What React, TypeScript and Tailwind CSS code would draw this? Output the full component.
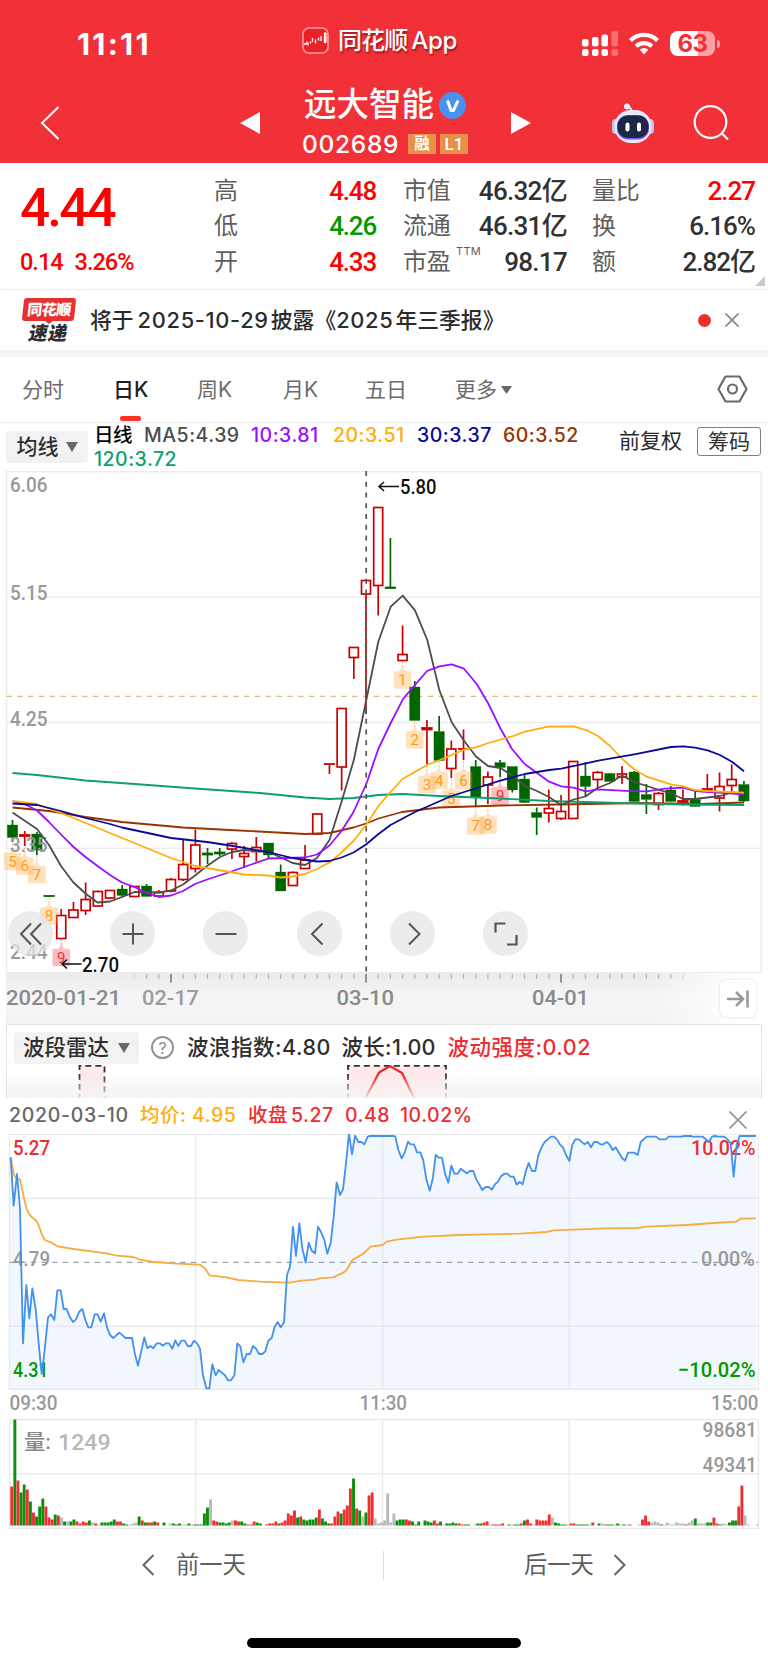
import { ReactNode } from "react";

const RED = "#cc0000";
const GREEN = "#006600";

// [body top, body bottom, high, low, rising]
type Candle = [number, number, number, number, boolean];

const candles: Candle[] = [
  [825, 837.5, 820, 842, false],
  [834.5, 836.5, 831, 846, true],
  [834, 850, 832, 855, false],
  [895.5, 896.5, 895.5, 896.5, false],
  [915.5, 938.5, 909, 939, true],
  [910, 917.5, 902, 917.5, true],
  [899.5, 910.5, 882.5, 915, true],
  [891.5, 906, 890.5, 906, true],
  [890.5, 898, 890.5, 899, true],
  [889, 895.5, 885, 897, false],
  [886.5, 896.5, 886.5, 896.5, true],
  [886, 896.5, 884, 896.5, false],
  [892.5, 896, 890, 897, true],
  [879.5, 891, 878, 892.5, true],
  [864.5, 879.5, 840, 881, true],
  [845, 868.5, 829.5, 872.5, true],
  [853, 855, 848, 864, false],
  [852, 854, 848, 856, false],
  [843.5, 849, 842, 859, true],
  [853.5, 856.5, 846, 868, true],
  [847.5, 851.5, 837, 861.5, true],
  [843, 855, 843, 858.5, false],
  [872, 891, 864.5, 891, false],
  [872.5, 885.5, 871.5, 886, true],
  [860, 868.5, 845, 868.5, true],
  [814, 834, 814, 834, true],
  [763.5, 764.5, 763.5, 774, true],
  [708.5, 767, 708.5, 790.5, true],
  [647.5, 657.5, 647.5, 679, true],
  [580.5, 594, 580.5, 714, true],
  [507.5, 585.5, 507.5, 615.5, true],
  [587, 588.5, 538, 588.5, false],
  [654.5, 660.5, 625.5, 660.5, true],
  [687, 720.5, 681, 720.5, false],
  [727.5, 730, 720, 764, true],
  [731.5, 760.5, 716, 760.5, false],
  [749, 768.5, 740.5, 778, true],
  [748.5, 749.5, 729.5, 760, true],
  [766.5, 797, 760, 806, false],
  [777, 785, 771.5, 804, true],
  [762.5, 767.5, 760, 777, false],
  [766.5, 790, 766.5, 792.5, false],
  [779, 802.5, 775, 803, false],
  [812.5, 817.5, 807.5, 835, false],
  [808.5, 813, 789.5, 822.5, true],
  [811.5, 818.5, 795, 820, true],
  [761.5, 818.5, 761.5, 818.5, true],
  [776, 786.5, 762, 797, false],
  [772.5, 779.5, 771, 788, true],
  [773.5, 781.5, 773, 781.5, false],
  [774, 777, 766, 784, true],
  [772, 801.5, 771, 802.5, false],
  [794.5, 799.5, 784, 814, false],
  [793.5, 804.5, 792, 810, true],
  [790, 801.5, 786, 802, false],
  [800.5, 802.5, 789.5, 805.5, true],
  [799.5, 806.5, 791.5, 807, false],
  [788.5, 790.5, 774, 793, true],
  [786.5, 798, 772.5, 811.5, true],
  [779.5, 785.5, 764.5, 793, true],
  [784.5, 801, 781, 802, false],
];

const candleX = (i: number) => 12.5 + i * 12.19;

const averages = [
  {
    color: "#993300",
    points:
      "12.5,807.5 49,811 85.5,817 122,822 183,827.5 230,830 268,832 305,834 329.5,833 353.5,827.5 366,823.5 378.5,818.5 402,812 439,807.5 470,806.5 500,805.5 560,804.5 640,803 700,804 744,802.5",
  },
  {
    color: "#0d9f6e",
    points:
      "12.5,773 37,775 85.5,780.5 134.5,784 195,788.5 260,793 305,797.5 329.5,799 353.5,798 378.5,795 402.5,794 439.5,796 500,798.5 549,801 620,803 683,804.5 744,805",
  },
  {
    color: "#4d4d4d",
    points:
      "12.5,812.5 37,829 49,845 61,866 73,882 86,894 97.5,902.5 110,901.5 122,897 134.5,892 159,892.5 171,890.5 183,884.5 195,875.5 207,866 220,857 232,852 244,850 268.5,852 280,857 292.5,863 305,865 317,858 329.5,840 341.5,802 353.8,760 366.3,700 378.3,641.7 390.7,606.7 402.7,595.7 415,610.3 427.3,640 439.3,690 451.7,722.3 464,740.7 476,756.5 488,766 500.5,768 513,776 525,786 537,791 549,797 561,805 573.5,799.5 585.5,796.5 597.5,788 610,783 622,775.5 634,782 647,786 659,790 671.5,793.5 683,799 695,799 707.5,797.5 720,796 732,792.5 744,794",
  },
  {
    color: "#9b0fff",
    points:
      "12.5,801 24.5,804 37,810.5 49,822 61,834.5 73.5,847 85.5,857 97.5,866 110,875 122,882.5 134.5,887 146.5,893 159,897 171,895.5 183,891 195,884 207,879.5 230,872 244,867 268.5,858.5 305,857.5 317,854.5 329.5,845.5 341.5,831 353.5,812 366.3,784 378.3,749 390.7,723 403.3,698.7 415,685 427,671 439.3,666.3 451.7,664.3 464,668.7 476.7,684 488,703 500,727.7 512,749 524.7,764 536.7,772.7 549,781.7 561.3,786.3 573.3,787.7 585.7,791.3 598,789.3 634.3,791.3 646.7,791.3 665,788.7 683.3,787.7 695,791 713,792.3 730,793.3 744,794.5",
  },
  {
    color: "#ffae0d",
    points:
      "12.5,801 37,804 73.5,818 110,833 146.5,848 171,858 195,866 230,872 244,874.5 268,875.5 280.5,877.5 292.5,876.5 305,874 317,869 329.5,862.5 341.5,852.5 353.5,841 366,825 378.5,806 390.5,792 402.5,779 427,765 440,760 464,749.7 476,747.3 488.3,743 513.3,736 525,731.7 548.3,726.7 574,726.3 586.7,730.3 598.3,736.3 610,746 623.3,760 634.3,769.3 646.7,776.7 671,784.3 683.3,786.3 695,790 707.7,791 744,792.7",
  },
  {
    color: "#0a0a99",
    points:
      "12.5,803.5 37,805 61,811 85.5,818 110,824 122,827.5 171,838 207,842 230,845.5 268,852 292.5,858 317,861.5 329.5,861 341.5,857.5 353.5,852.5 366,844.5 378.5,834 390.5,825 415,812 451.5,796 480,787 500.3,780.7 524.7,774 549.3,770 561.3,768.7 598.3,760.7 634.3,754.3 671,747 683.3,746.3 695,747.7 707.7,750.3 720,755 732.3,762 744,771.3",
  },
];

// [candle index, centre y, digit, stem start]
const markers: [number, number, string, number][] = [
  [0, 861.5, "5", 843],
  [1, 866, "6", 847],
  [2, 874.5, "7", 855],
  [3, 916, "8", 897],
  [4, 957.5, "9", 939],
  [32, 680, "1", 661],
  [33, 740, "2", 721],
  [34, 784.5, "3", 765],
  [35, 780.5, "4", 761],
  [36, 799, "5", 779],
  [37, 780.5, "6", 761],
  [38, 826, "7", 807],
  [39, 825, "8", 805],
  [40, 796, "9", 777],
];

const priceLine =
  "32,112 41,257 51,162 60,265 69,670 79,495 88,595 97,505 107,568 116,670 125,762 134,690 144,592 153,583 163,600 172,511 182,511 191,567 200,567 209,590 219,606 228,598 237,576 247,567 256,600 265,622 274,622 284,583 293,583 302,605 312,580 321,622 330,645 340,654 358,638 377,654 396,654 405,703 414,737 433,652 442,685 451,678 460,685 470,670 480,670 488,677 498,670 507,670 517,686 526,661 535,678 544,662 554,662 563,678 573,678 582,662 591,670 600,686 609,766 619,805 628,805 637,733 647,766 656,750 675,766 684,781 693,781 703,766 712,670 721,679 730,727 740,702 750,702 759,678 768,686 777,702 787,702 796,694 805,662 815,654 824,621 833,606 842,622 852,607 861,465 870,440 879,321 888,408 898,310 907,385 917,428 926,368 935,392 945,400 954,320 963,336 973,360 982,401 992,368 1001,290 1010,187 1020,225 1029,208 1038,130 1047,40 1056,103 1065,47 1075,66 1084,66 1093,73 1103,50 1110,48 1182,48 1186,50 1195,90 1205,115 1214,98 1224,65 1232,73 1242,73 1251,97 1261,97 1270,122 1279,178 1289,212 1298,178 1307,105 1316,113 1326,113 1335,160 1345,188 1354,137 1363,161 1373,161 1382,146 1400,160 1410,153 1420,153 1429,178 1447,210 1457,201 1467,201 1475,209 1485,193 1494,185 1503,169 1513,161 1522,161 1531,170 1541,170 1550,194 1559,186 1568,193 1577,155 1586,129 1596,153 1606,153 1615,106 1625,81 1634,66 1653,50 1662,50 1671,58 1680,74 1689,82 1698,105 1708,123 1717,74 1726,58 1736,58 1754,73 1764,66 1773,82 1782,66 1792,66 1801,73 1810,73 1820,66 1829,74 1838,90 1847,82 1866,114 1875,122 1884,98 1903,98 1913,105 1922,66 1940,50 1969,50 1978,58 1997,58 2006,50 2043,50 2052,48 2071,48 2078,50 2108,50 2118,58 2127,66 2136,50 2145,48 2154,50 2173,50 2182,58 2192,70 2201,170 2210,73 2219,48 2268,48";

const avgLine =
  "32,112 42,165 52,177 60,178 70,225 79,265 88,283 97,293 107,300 116,315 125,342 134,360 153,367 172,379 220,387 280,395 320,400 350,407 400,411 420,419 460,426 530,431 600,434 615,445 628,466 680,472 715,480 780,485 868,488 905,482 945,479 960,475 1000,472 1030,458 1040,450 1057,420 1090,401 1112,380 1148,375 1160,365 1190,359 1270,350 1380,345 1560,341 1640,336 1660,331 1820,325 1910,324 1940,320 2060,315 2140,309 2208,305 2222,296 2268,295";

// one entry per minute: colour letter (R up, G down, X flat) and height
const volumes =
  "R39 G106 R45 G33 G41 R36 G24 R13 G9 G19 G27 R19 R8 R6 G11 R10 X8 G4 X4 G4 G6 R4 R2 R4 R3 G5 X3 R2 X1 G3 G3 G3 G4 G6 R4 R4 G2 G1 X1 X2 X3 G9 R5 G3 R3 R3 G4 R3 X0 G3 X0 X2 G2 G1 G2 X1 X1 G2 X1 G1 G1 G1 G12 G18 X26 R5 R4 G3 G3 G2 G3 X5 R5 R4 G4 G2 R1 R1 R4 G3 G2 X0 R1 R2 R2 R4 G2 R3 R5 R12 R10 R15 G8 R9 G6 G5 G6 G6 G8 R16 G7 G4 G2 R2 R9 R14 G12 R16 R20 R37 G47 R17 G15 X9 G13 R30 R33 X7 X2 X3 X5 X32 X3 X12 G5 G6 G6 R6 R5 G4 G1 G4 X0 G5 G4 G3 R5 R2 G4 X1 G2 G2 G3 G2 R2 R1 G1 G1 X0 X1 G2 G2 R3 R4 X1 R1 R1 R1 R2 X0 G1 X1 G1 G1 R2 G5 R6 R2 X1 R6 R5 R5 R5 R11 X8 G3 G2 G1 G1 X1 R2 R2 G1 G1 G1 G1 X1 R3 X0 G2 X2 R1 G1 G1 X1 G2 X1 G1 X1 R1 X0 X0 X1 R6 R10 R4 X3 X4 X3 G1 X1 X3 X1 X1 X3 X2 X2 R1 X3 X5 G7 X2 X2 X2 G3 G3 R8 R2 G1 X2 X1 G3 G5 G5 R19 R40 X10 X1 X0 X0 X1"
    .split(" ")
    .map((v) => ({ kind: v[0], height: Number(v.slice(1)) }));

const volumeColors: Record<string, string> = {
  R: "#ee3033",
  G: "#0c8f0c",
  X: "#b9b9b9",
};

// Chart label squeezed to the narrow numeral width of the app
const Label = ({
  x,
  y,
  w,
  size = 21,
  fill = "#999",
  children,
}: {
  x: number;
  y: number;
  w: number;
  size?: number;
  fill?: string;
  children: string;
}) => (
  <text
    x={x}
    y={y + size * 0.356}
    fontSize={size}
    fontWeight={500}
    fill={fill}
    textLength={w}
    lengthAdjust="spacingAndGlyphs"
    className="font-['Roboto','Noto_Sans_CJK_SC',sans-serif]"
  >
    {children}
  </text>
);

const StatusBar = () => (
  <div className="grid h-[84px] grid-cols-[302px_279px_1fr] items-center pt-[3px] text-white">
    <span className="pl-[77px] text-[30.500px] font-bold tracking-[2.200px]">11:11</span>
    <div className="flex items-center gap-[9px]">
      <svg width="27" height="27" viewBox="0 0 27 27" className="-mt-[6px]">
        <rect x="1" y="1" width="25" height="25" rx="6" fill="#ea2227" stroke="#f8a0a3" strokeWidth="1.6" />
        <path
          d="M2 17h3M5 17v-2.5M6 15.5v3M8.5 16.5v-2M10.500 11v4M13.500 12.500v4M16.500 10.500v3M19 9v5M22.500 6v9.500M24 6v9.500M22.500 6h1.500M22.500 15.500h1.500"
          stroke="#fff"
          strokeWidth="1.300"
        />
      </svg>
      <span className="-mt-[5px] text-[24px] font-medium tracking-[-0.900px] [text-shadow:1px_2px_2px_rgba(80,0,0,0.55)]">
        同花顺<span className="ml-[4px] tracking-[-0.3px]">App</span>
      </span>
    </div>
    <div className="flex items-center gap-[11px] pl-[1px]">
      <svg width="36" height="25" viewBox="0 0 36 25" fill="#fff">
        <rect x="0" y="8" width="6.500" height="7.500" rx="2" />
        <rect x="10" y="6" width="6.500" height="9.500" rx="2" />
        <rect x="19.500" y="3.500" width="6.500" height="12" rx="2" />
        <rect x="0" y="18" width="6.500" height="7" rx="2" />
        <rect x="10" y="18" width="6.500" height="7" rx="2" />
        <rect x="19.500" y="18" width="6.500" height="7" rx="2" />
        <g opacity="0.3">
          <rect x="29.500" y="0" width="6.500" height="15.500" rx="2" />
          <rect x="29.500" y="18" width="6.500" height="7" rx="2" />
        </g>
      </svg>
      <svg width="30" height="23" viewBox="0 0 30 23" fill="none" stroke="#fff" strokeWidth="4.200">
        <path d="M1.500 8.500a19 19 0 0 1 27 0" />
        <path d="M7 14.300a11.500 11.500 0 0 1 16 0" />
        <path d="M15 22.500l-4.200-4.800a6.200 6.200 0 0 1 8.400 0z" fill="#fff" stroke="none" />
      </svg>
      <div className="flex items-center gap-[2px]">
        <div className="relative flex h-[25px] w-[45px] items-center justify-center overflow-hidden rounded-[8px] bg-[linear-gradient(90deg,#fff_63%,#f9a0a4_63%)]">
          <span className="text-[24px] leading-none font-bold tracking-[-0.5px] text-[#f23038]">63</span>
        </div>
        <div className="h-[8px] w-[3px] rounded-r-full bg-[#f9a0a4]" />
      </div>
    </div>
  </div>
);

const Robot = () => (
  <svg width="44" height="42" viewBox="0 0 44 42">
    <path d="M15 5q5-1 6 5" fill="none" stroke="#dfe6fb" strokeWidth="2" />
    <circle cx="16" cy="4.500" r="3" fill="#e9eefc" />
    <rect x="1" y="17" width="8" height="15" rx="4" fill="#bcc6ea" />
    <rect x="35" y="17" width="8" height="15" rx="4" fill="#bcc6ea" />
    <rect x="3.500" y="8" width="37" height="33" rx="16" fill="#e6ebfb" />
    <rect x="6" y="13" width="32" height="24.500" rx="11" fill="#7b56e0" />
    <rect x="6.500" y="13.500" width="31" height="22.500" rx="10.500" fill="#1d2848" />
    <rect x="14.500" y="20.500" width="4" height="9" rx="2" fill="#fff" />
    <rect x="26" y="20.500" width="4" height="9" rx="2" fill="#fff" />
  </svg>
);

const TitleBar = () => (
  <div className="grid h-[79px] grid-cols-[240px_62px_209px_100px_1fr] items-center text-white">
    <svg width="20" height="36" viewBox="0 0 20 36" className="ml-[40px] -mt-[2px]">
      <path d="M18.500 2L2 18l16.500 16" fill="none" stroke="#fff" strokeWidth="2" />
    </svg>
    <svg width="20" height="22" viewBox="0 0 20 22" className="-mt-[1px]">
      <path d="M20 0v22L0 11z" fill="#fff" />
    </svg>
    <div className="h-[79px]">
      <div className="flex h-[40px] items-center gap-[5px] pt-[2px] pl-[2px]">
        <span className="text-[32.500px] leading-none font-medium">远大智能</span>
        <svg width="27" height="27" viewBox="0 0 27 27">
          <circle cx="13.500" cy="13.500" r="13.500" fill="#4a90ee" />
          <path d="M8.500 8.500L12 18.500h2.500L19 8.500" fill="none" stroke="#fff" strokeWidth="3" strokeLinejoin="round" />
        </svg>
      </div>
      <div className="flex h-[39px] items-center pt-[1px]">
        <span className="w-[106px] text-[24.500px] font-medium tracking-[0.700px]">002689</span>
        <span className="mr-1 flex h-[20px] w-[28px] items-center justify-center bg-[#e59149] text-[15.500px] leading-none font-bold">
          融
        </span>
        <span className="flex h-[20px] w-[28px] items-center justify-center bg-[#e59149] font-['Roboto'] text-[17px] leading-none font-medium">
          L1
        </span>
      </div>
    </div>
    <svg width="20" height="22" viewBox="0 0 20 22" className="-mt-[1px]">
      <path d="M0 0v22l20-11z" fill="#fff" />
    </svg>
    <div className="-mt-[2px] flex items-center gap-[38px]">
      <Robot />
      <svg width="36" height="36" viewBox="0 0 36 36" fill="none" stroke="#fff" strokeWidth="2.200">
        <circle cx="17.500" cy="17" r="15.800" />
        <path d="M28.500 28l6.500 6.500" />
      </svg>
    </div>
  </div>
);

const quotes = [
  ["高", "4.48", "text-[#ff0000]", "市值", "46.32亿", "量比", "2.27", "text-[#ff0000]"],
  ["低", "4.26", "text-[#009900]", "流通", "46.31亿", "换", "6.16%", "text-[#323232]"],
  ["开", "4.33", "text-[#ff0000]", "市盈", "98.17", "额", "2.82亿", "text-[#323232]"],
];

const Quote = () => (
  <div className="relative flex h-[127px] border-b border-[#ececec]">
    <div className="w-[214px] pl-[20px] font-['Roboto'] font-medium text-[#ff0000]">
      <div className="mt-[18px] h-[54px] text-[53px] leading-[54px] tracking-[-2.800px]">4.44</div>
      <div className="mt-[15px] flex gap-[12px] text-[23.500px] leading-[24px] tracking-[-1px]">
        <span>0.14</span>
        <span>3.26%</span>
      </div>
    </div>
    <div className="flex flex-col pt-[10px]">
      {quotes.map((q) => (
        <div
          key={q[0]}
          className="grid h-[35.500px] grid-cols-[60px_102px_27px_50px_114px_25px_50px_113px] items-center text-[24px] leading-none font-medium tracking-[-0.3px] text-[#323232]"
        >
          <span className="font-normal text-[#5f5f5f]">{q[0]}</span>
          <span className={`text-right font-['Roboto'] text-[26px] tracking-[-1.200px] ${q[2]}`}>{q[1]}</span>
          <span />
          <span className="relative font-normal whitespace-nowrap text-[#5f5f5f]">
            {q[3]}
            {q[3] === "市盈" && (
              <span className="absolute -top-[4px] left-[53px] text-[11px] leading-none tracking-[0.3px]">TTM</span>
            )}
          </span>
          <span className="text-right font-['Roboto','Noto_Sans_CJK_SC'] text-[26px] tracking-[-0.700px]">{q[4]}</span>
          <span />
          <span className="font-normal whitespace-nowrap text-[#5f5f5f]">{q[5]}</span>
          <span className={`text-right font-['Roboto','Noto_Sans_CJK_SC'] text-[26px] tracking-[-1px] ${q[7]}`}>
            {q[6]}
          </span>
        </div>
      ))}
    </div>
    <svg width="10" height="10" className="absolute right-[3px] bottom-[3px]">
      <path d="M10 0v10H0z" fill="#c8c8c8" />
    </svg>
  </div>
);

const News = () => (
  <div className="flex h-[60px] items-center pl-[22px]">
    <div className="flex h-[45px] w-[54px] flex-col items-center">
      <div className="flex h-[23px] w-[52px] -skew-x-6 items-center justify-center rounded-[3px] bg-[#e83030] text-[15px] leading-none font-black tracking-[-0.500px] text-white">
        同花顺
      </div>
      <svg width="8" height="3" className="shrink-0">
        <path d="M0 0h8L4 3z" fill="#e83030" />
      </svg>
      <div className="-skew-x-12 text-[19px] leading-[19px] font-black tracking-[0.5px] text-[#2e2e2e]">速递</div>
    </div>
    <p className="ml-[14px] flex-1 text-[21.800px] font-medium whitespace-pre text-[#2b2b2b]">
      将于<span className="mr-[2px] ml-[4px] tracking-[0.700px]">2025-10-29</span>披露《<span className="mr-[2px] tracking-[0.700px]">2025</span>年三季报》
    </p>
    <div className="mr-[14px] h-[13px] w-[13px] rounded-full bg-[#e8302f]" />
    <svg width="14" height="14" className="mr-[29px]" stroke="#8c8c8c" strokeWidth="1.800">
      <path d="M0.500 0.500l13 13M13.500 0.500l-13 13" />
    </svg>
  </div>
);

const Tabs = () => (
  <div className="grid h-[66px] grid-cols-[91px_84px_86px_82px_90px_240px_1fr] items-center border-b border-[#ececec] pl-[22px] text-[21px] text-[#6b6b6b]">
    <span>分时</span>
    <span className="flex h-full flex-col items-start justify-end">
      <span className="mb-[11px] font-medium text-[#1f1f1f]">日K</span>
      <span className="mb-[1px] ml-[7px] h-[5px] w-[21px] rounded-[2px] bg-[#fb3329]" />
    </span>
    <span>周K</span>
    <span>月K</span>
    <span>五日</span>
    <span className="flex items-center gap-[4px]">
      更多
      <svg width="11" height="8">
        <path d="M0 0h11L5.500 8z" fill="#666" />
      </svg>
    </span>
    <svg width="31" height="28" viewBox="0 0 31 28" className="ml-[22px] -mt-[2px]" fill="none" stroke="#6b6b6b" strokeWidth="2.200">
      <path d="M8.500 1.500h14L29.500 14l-7 12.500h-14L1.500 14z" strokeLinejoin="round" />
      <circle cx="15.500" cy="14" r="4.500" />
    </svg>
  </div>
);

const Caret = () => (
  <svg width="12" height="10">
    <path d="M0 0h12L6 10z" fill="#666" />
  </svg>
);

const IndicatorBar = () => (
  <div className="flex h-[48px]">
    <div className="mt-[8px] ml-[6px] flex h-[32px] w-[82px] items-center justify-center gap-[7px] rounded-[4px] bg-[#f2f2f2] text-[21px] font-medium text-[#2e2e2e]">
      均线
      <Caret />
    </div>
    <div className="ml-[6px] w-[525px] pt-[1px] text-[19.500px] leading-[23.500px] font-medium tracking-[0.500px]">
      <div className="grid grid-cols-[50px_107px_82px_84px_86px_1fr] whitespace-nowrap">
        <span className="tracking-[-0.500px] text-black">日线</span>
        <span className="text-[#4d4d4d]">MA5:4.39</span>
        <span className="text-[#9b0fff]">10:3.81</span>
        <span className="text-[#ffae0d]">20:3.51</span>
        <span className="text-[#0a0a99]">30:3.37</span>
        <span className="text-[#993300]">60:3.52</span>
      </div>
      <div className="text-[#0d9f6e]">120:3.72</div>
    </div>
    <span className="mt-[2px] w-[78px] text-[21px] text-[#2b2b2b]">前复权</span>
    <span className="mt-[4px] flex h-[29px] w-[64px] items-center justify-center rounded-[3px] border-[1.500px] border-[#808080] text-[21px] leading-none text-[#333]">
      筹码
    </span>
  </div>
);

const RoundButton = ({ children }: { children: ReactNode }) => (
  <div className="flex h-[45px] w-[45px] items-center justify-center rounded-full bg-[#e6e6e6]/75">
    <svg width="24" height="24" viewBox="0 0 24 24" fill="none" stroke="#555" strokeWidth="2">
      {children}
    </svg>
  </div>
);

const KLine = () => (
  <div className="relative h-[502px]">
    <svg width="768" height="502" viewBox="0 471 768 502">
      <g fill="none" stroke="#ececec" strokeWidth="1.300">
        <rect x="6.600" y="471.700" width="754.700" height="501" />
        <path d="M7 597.200h754M7 722.500h754M7 848.300h754" />
      </g>
      <path d="M6.500 696.300h755" stroke="#e3b985" strokeDasharray="5.4 5.4" strokeWidth="1.200" />
      {candles.map(([top, bottom, high, low, up], i) => {
        const x = candleX(i);
        const color = up ? RED : GREEN;
        const thin = bottom - top < 3;
        return (
          <g key={i} stroke={color} strokeWidth="1.700">
            {high < top && <path d={`M${x} ${high}V${top}`} />}
            {low > bottom && <path d={`M${x} ${bottom}V${low}`} />}
            <rect
              x={x - (thin || !up ? 5.200 : 4.500)}
              y={top}
              width={thin || !up ? 10.400 : 9}
              height={Math.max(bottom - top, 0.5)}
              fill={up ? (thin ? color : "#fff") : color}
              strokeWidth={thin ? 0.8 : up ? 1.700 : 0.3}
            />
          </g>
        );
      })}
      {markers.map(([i, y, digit, from]) => {
        const x = candleX(i);
        const nine = digit === "9";
        const box = nine ? "#f2555f" : "#ffa12e";
        return (
          <g key={i}>
            <path d={`M${x} ${from}V${y - 12}`} stroke={box} strokeOpacity="0.7" strokeDasharray="2.500 1.500" />
            <g fill={box} fillOpacity={nine ? 0.38 : 0.32}>
              <rect x={x - 8.800} y={y - 8.800} width="17.600" height="17.600" rx="1.500" />
              <path d={`M${x - 3} ${y - 8.8}L${x} ${y - 13}L${x + 3} ${y - 8.8}z`} />
            </g>
            <text
              x={x}
              y={y + 5.3}
              textAnchor="middle"
              fontSize="15"
              fill={nine ? "#ee3038" : "#ff991a"}
              className="font-['Roboto']"
            >
              {digit}
            </text>
          </g>
        );
      })}
      <Label x={10} y={485} w={37.500}>6.06</Label>
      <Label x={10} y={593} w={37.500}>5.15</Label>
      <Label x={10} y={718.500} w={37.500}>4.25</Label>
      <Label x={10} y={844.500} w={37.500}>3.35</Label>
      <Label x={10} y={951.700} w={37.500}>2.44</Label>
      <g fill="none" strokeWidth="1.800" strokeLinejoin="round">
        {averages.map((line) => (
          <polyline key={line.color} points={line.points} stroke={line.color} />
        ))}
      </g>
      <path d="M366.200 471v502" stroke="#555" strokeWidth="1.700" strokeDasharray="5 5.770" />
      <g fill="none" stroke="#111" strokeWidth="1.500">
        <path d="M399 486.500h-20M384 482l-5 4.500 5 4.500" />
        <path d="M81.500 964H62M67 959.500l-5 4.500 5 4.500" />
      </g>
      <Label x={400} y={487} w={36.500} fill="#111">5.80</Label>
      <Label x={82} y={964.500} w={37} fill="#111">2.70</Label>
    </svg>
    <div className="absolute bottom-[17px] left-[8px] flex">
      <div className="w-[102px]">
        <RoundButton>
          <path d="M12 1.500L2 12l10 10.500M22 1.500L12 12l10 10.500" />
        </RoundButton>
      </div>
      <div className="w-[93.300px]">
        <RoundButton>
          <path d="M12 1.500v21M1.500 12h21" />
        </RoundButton>
      </div>
      <div className="w-[93.300px]">
        <RoundButton>
          <path d="M1.500 12h21" />
        </RoundButton>
      </div>
      <div className="w-[93.300px]">
        <RoundButton>
          <path d="M15.500 1.500L5 12l10.500 10.500" />
        </RoundButton>
      </div>
      <div className="w-[93.300px]">
        <RoundButton>
          <path d="M9 1.500L19.500 12 9 22.500" />
        </RoundButton>
      </div>
      <RoundButton>
        <path d="M1.500 10.500v-9h10M22.500 13v9.500h-9.500" strokeWidth="2.200" />
      </RoundButton>
    </div>
  </div>
);

const DateAxis = () => (
  <div className="relative ml-[6px] h-[51px] bg-[linear-gradient(90deg,transparent_85%,#fff_96%),linear-gradient(180deg,#ebebeb_0,#f5f5f5_45%,#f3f3f3_100%)]">
    <svg width="762" height="51" viewBox="6 973 762 51">
      {candles.map((_, i) => {
        if (i < 10 || i > 55) return null;
        const major = i === 13 || i === 29 || i === 45;
        return (
          <path
            key={i}
            d={`M${candleX(i)} 974v${major ? 8.5 : 5}`}
            stroke={major ? "#888" : "#b5b5b5"}
            strokeWidth={major ? 1.8 : 1.2}
            opacity={i === 10 || i === 55 ? 0.4 : 1}
          />
        );
      })}
      <Label x={6} y={998} w={115} fill="#8a8a8a">2020-01-21</Label>
      <Label x={142} y={998} w={57} fill="#9c9c9c">02-17</Label>
      <Label x={336.500} y={998} w={57.500} fill="#8a8a8a">03-10</Label>
      <Label x={532} y={998} w={57} fill="#8a8a8a">04-01</Label>
    </svg>
    <div className="absolute top-[7px] right-[12px] flex h-[37px] w-[36px] items-center justify-center rounded-[6px] bg-white shadow-[0_0_3px_rgba(0,0,0,0.15)]">
      <svg width="22" height="18" fill="none" stroke="#999" strokeWidth="2.600">
        <path d="M0 9h16M9 2l7 7-7 7M20.500 0.500v17" />
      </svg>
    </div>
  </div>
);

const WaveRadar = () => (
  <div className="mx-[6px] h-[74px] border-x border-t border-[#e6e6e6] bg-[linear-gradient(180deg,#fff_70%,#f3f3f3)]">
    <div className="flex h-[40px] items-center pt-[5px] pl-[7px] text-[21.500px] font-medium whitespace-nowrap text-[#2e2e2e]">
      <div className="flex h-[32px] w-[125px] items-center justify-center gap-[9px] rounded-[4px] bg-[#f2f2f2]">
        波段雷达
        <Caret />
      </div>
      <div className="mr-[13px] ml-[12px] flex h-[23px] w-[23px] items-center justify-center rounded-full border-2 border-[#949494] text-[16px] font-normal text-[#888]">
        ?
      </div>
      <span className="w-[154.500px] tracking-[0.500px]">波浪指数:4.80</span>
      <span className="w-[106px] tracking-[0.300px]">波长:1.00</span>
      <span className="tracking-[0.500px] text-[#ee2d30]">波动强度:0.02</span>
    </div>
    <svg width="754" height="33" viewBox="7 1065 754 33">
      <defs>
        <linearGradient id="fade" x1="0" y1="0" x2="0" y2="1">
          <stop offset="0.300" stopColor="#f5f5f5" stopOpacity="0" />
          <stop offset="1" stopColor="#f5f5f5" stopOpacity="0.900" />
        </linearGradient>
      </defs>
      <g fill="#fde9ea" stroke="#333" strokeWidth="1.800" strokeDasharray="6 4">
        <path d="M79.500 1100V1065.800h25V1100" />
        <path d="M348 1100V1065.800h98V1100" />
      </g>
      <path d="M364.500 1100L379 1072.500l11-6.500 12 7 13 27" fill="none" stroke="#ee2428" strokeWidth="2.200" />
      <rect x="7" y="1065" width="754" height="33" fill="url(#fade)" />
    </svg>
  </div>
);

const MinuteHeader = () => (
  <div className="flex h-[36px] items-center pl-[9px] text-[19.500px] font-medium tracking-[0.500px] whitespace-nowrap">
    <span className="w-[131px] tracking-[0.700px] text-[#666]">2020-03-10</span>
    <span className="w-[108px] text-[#ffae0d]">均价: 4.95</span>
    <span className="w-[97px] text-[#ee2d30]">
      收盘<span className="ml-[3px]">5.27</span>
    </span>
    <span className="w-[55px] text-[#ee2d30]">0.48</span>
    <span className="flex-1 text-[#ee2d30]">10.02%</span>
    <svg width="18" height="18" className="mt-[8px] mr-[21px]" stroke="#999" strokeWidth="1.800">
      <path d="M0.500 0.500l17 17M17.500 0.500l-17 17" />
    </svg>
  </div>
);

const MinuteChart = () => (
  <div>
    {/* the lines are plotted three units to a pixel */}
    <svg width="768" height="256" viewBox="0 42 2304 768">
      <polygon points={`28,808 ${priceLine} 2268,808`} fill="#f2f7fe" />
      <path
        d="M28 43.500H2275V808H28zM28 235H2275M28 619H2275M587 43V808M1148 43V808M1708 43V808"
        fill="none"
        stroke="#e5e7eb"
        strokeWidth="3.500"
      />
      <path d="M28 427H2275" stroke="#a0a5ac" strokeWidth="3.500" strokeDasharray="17 15" />
      <g transform="translate(0 -3360) scale(3)">
        <Label x={13} y={1148} w={37} fill="#ee2d30">5.27</Label>
        <Label x={13} y={1258.500} w={37}>4.79</Label>
        <Label x={13} y={1369.500} w={35.500} fill="#009900">4.31</Label>
        <Label x={691} y={1148} w={64.500} fill="#ee2d30">10.02%</Label>
        <Label x={701} y={1258.500} w={54}>0.00%</Label>
        <Label x={678} y={1369.500} w={77.500} fill="#009900">−10.02%</Label>
      </g>
      <g fill="none" strokeLinejoin="round">
        <polyline points={avgLine} stroke="#f8ab42" strokeWidth="5.500" />
        <polyline points={priceLine} stroke="#4492ee" strokeWidth="5.500" />
      </g>
    </svg>
    <svg width="768" height="29" viewBox="0 1390 768 29">
      <Label x={9.500} y={1403} w={48}>09:30</Label>
      <Label x={359.500} y={1403} w={47.500}>11:30</Label>
      <Label x={711} y={1403} w={47.500}>15:00</Label>
    </svg>
  </div>
);

const VolumeChart = () => (
  <svg width="768" height="110" viewBox="0 1419 768 110">
    <path
      d="M9.500 1419.600H758.500V1528.300H9.500zM9.500 1473.800H758.500M195.700 1419V1528M382.500 1419V1528M569.200 1419V1528"
      fill="none"
      stroke="#e8e8e8"
      strokeWidth="1.200"
    />
    {volumes.map(({ kind, height }, i) => (
      <rect
        key={i}
        x={10.300 + i * 3.107}
        y={1525.500 - height}
        width="2.900"
        height={height}
        fill={volumeColors[kind]}
      />
    ))}
    <Label x={24} y={1442} w={27} fill="#858585">量:</Label>
    <Label x={58} y={1442} w={52.500} size={22} fill="#b8b8b8">1249</Label>
    <Label x={702.500} y={1430} w={54.500}>98681</Label>
    <Label x={702.500} y={1465} w={54.500}>49341</Label>
  </svg>
);

const DayNav = () => (
  <div className="grid h-[72px] grid-cols-[383px_1px_1fr] items-center text-[23.300px] leading-none text-[#5f5f5f]">
    <div className="flex items-center gap-[22px] pl-[142px]">
      <svg width="12" height="22" fill="none" stroke="#666" strokeWidth="2">
        <path d="M11.500 1L1.500 11l10 10" />
      </svg>
      前一天
    </div>
    <div className="h-[29px] bg-[#dcdcdc]" />
    <div className="flex items-center gap-[20px] pl-[140px]">
      后一天
      <svg width="12" height="22" fill="none" stroke="#666" strokeWidth="2">
        <path d="M0.500 1l10 10-10 10" />
      </svg>
    </div>
  </div>
);

const App = () => {
  return (
    <div className="h-[1662px] w-[768px] overflow-hidden bg-white font-['Inter','Noto_Sans_CJK_SC',sans-serif] [&_svg]:block">
      <header className="bg-[#f23038]">
        <StatusBar />
        <TitleBar />
      </header>
      <Quote />
      <News />
      <div className="h-[7px] bg-[#f4f4f4]" />
      <Tabs />
      <IndicatorBar />
      <KLine />
      <DateAxis />
      <WaveRadar />
      <MinuteHeader />
      <MinuteChart />
      <VolumeChart />
      <DayNav />
      <div className="mx-auto mt-[37px] h-[10px] w-[274px] rounded-full bg-black" />
    </div>
  );
};

export default App;
